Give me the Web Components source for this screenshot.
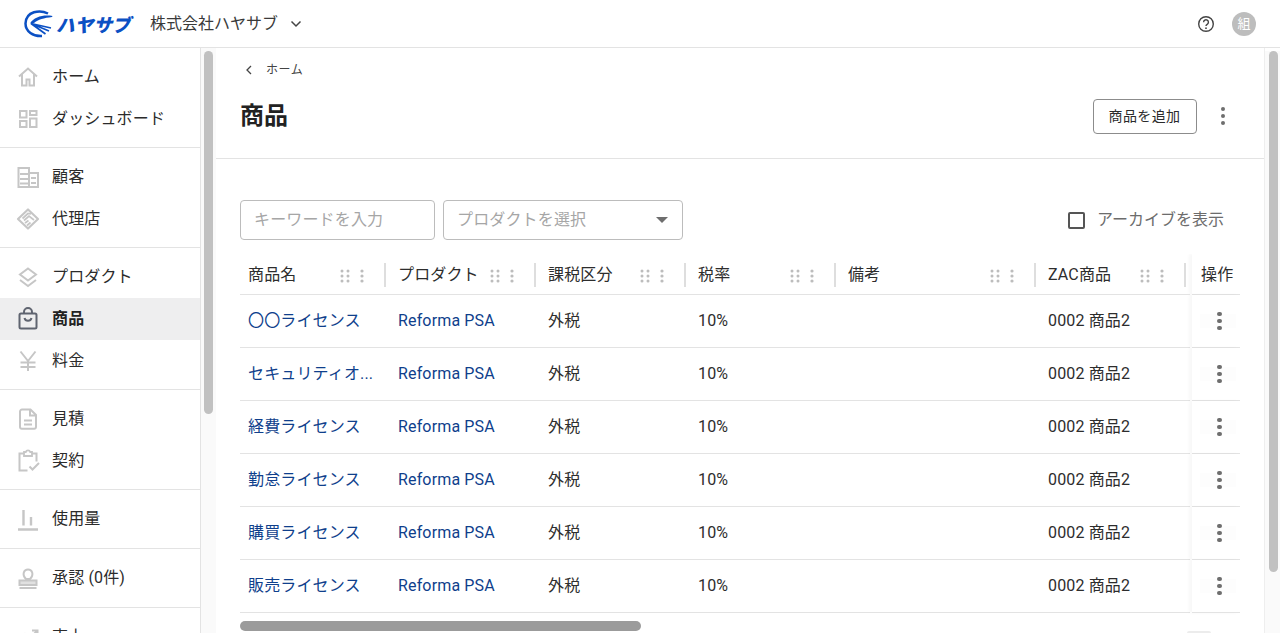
<!DOCTYPE html>
<html lang="ja">
<head>
<meta charset="utf-8">
<title>商品</title>
<style>
  html, body { margin: 0; height: 100%; overflow: hidden; background: #fff; }
  body {
    font-family: Roboto, "Noto Sans CJK JP", sans-serif;
    font-size: 16px;
    line-height: 20px;
    letter-spacing: .15px;
    color: #262626;
  }
</style>
</head>
<body>
<app-shell>
  <app-header slot="header" company="株式会社ハヤサブ" avatar="組"></app-header>
  <side-nav slot="nav">
    <nav-group>
      <nav-item icon="home">ホーム</nav-item>
      <nav-item icon="dashboard">ダッシュボード</nav-item>
    </nav-group>
    <nav-group>
      <nav-item icon="building">顧客</nav-item>
      <nav-item icon="handshake">代理店</nav-item>
    </nav-group>
    <nav-group>
      <nav-item icon="layers">プロダクト</nav-item>
      <nav-item icon="bag" active>商品</nav-item>
      <nav-item icon="yen">料金</nav-item>
    </nav-group>
    <nav-group>
      <nav-item icon="doc">見積</nav-item>
      <nav-item icon="contract">契約</nav-item>
    </nav-group>
    <nav-group single>
      <nav-item icon="bars">使用量</nav-item>
    </nav-group>
    <nav-group single>
      <nav-item icon="stamp">承認 (0件)</nav-item>
    </nav-group>
    <nav-group single>
      <nav-item icon="chart">売上</nav-item>
    </nav-group>
  </side-nav>
  <fake-scrollbar slot="nav-scroll" offset="3" length="363" pad="3" width="15"></fake-scrollbar>
  <page-head slot="main" back="ホーム" heading="商品" action="商品を追加"></page-head>
  <filter-bar slot="main"></filter-bar>
  <product-table slot="main"></product-table>
  <fake-scrollbar slot="main-scroll" offset="3" length="521" pad="4" width="15"></fake-scrollbar>
</app-shell>

<script>
const ICONS = {
  home: `<path d="M3 11.500 12 3.500l9 8M6 9.500V20.500h4.500V14.500h3V20.500H18V9.500" fill="none" stroke="currentColor" stroke-width="2"/>`,
  dashboard: `<path d="M4 4h6.500v6.500H4zM14 4h6.500v4H14zM14 11.500h6.500V20H14zM4 14h6.500v6H4z" fill="none" stroke="currentColor" stroke-width="2"/>`,
  building: `<path d="M2.500 3h10.500v19H2.500zM13 8h9v14h-9z" fill="none" stroke="currentColor" stroke-width="2"/><path d="M4 9h8M4 14h8M4 18.500h8M15 13h5M15 18h5" stroke="currentColor" stroke-width="2"/>`,
  handshake: `<path d="M12 2.500 22 12 12 21.500 2 12Z" fill="none" stroke="currentColor" stroke-width="2.200" stroke-linejoin="round"/><path d="M6.500 11.500 12 6.500l3 .5M8 13.500l5-4.500 5 4M9 16l3.500-2.500M11 18.500l3.500-3" fill="none" stroke="currentColor" stroke-width="1.700"/>`,
  layers: `<path d="M12 3.500 20 9.500 12 15.500 4 9.500Z" fill="none" stroke="currentColor" stroke-width="2"/><path d="M4 15l8 6 8-6" fill="none" stroke="currentColor" stroke-width="2"/>`,
  bag: `<rect x="3.500" y="6.500" width="17" height="15" rx="1.500" fill="none" stroke="currentColor" stroke-width="2"/><path d="M8 6.500V5a4 4 0 0 1 8 0v1.500M8.500 11a3.600 3.600 0 0 0 7 0" fill="none" stroke="currentColor" stroke-width="2"/>`,
  yen: `<path d="M4.500 2.500 12 12l7.500-9.500M12 12v10M4.500 13.500h15M4.500 18h15" fill="none" stroke="currentColor" stroke-width="2"/>`,
  doc: `<path d="M6 2.500h8.500L20 8v12a1.700 1.700 0 0 1-1.700 1.700H5.700A1.700 1.700 0 0 1 4 20V4.500A2 2 0 0 1 6 2.500ZM14 2.500V8.500h6M8 13.500h8M8 17.500h8" fill="none" stroke="currentColor" stroke-width="2"/>`,
  contract: `<path d="M8 4.500H3.500v17h8M16 4.500h4.500v8" fill="none" stroke="currentColor" stroke-width="2"/><path d="M8 3h1.800a2.300 2.300 0 0 1 4.400 0H16v4H8Z" fill="none" stroke="currentColor" stroke-width="1.800"/><path d="m13.500 17.500 3 3 6.500-6.500" fill="none" stroke="currentColor" stroke-width="2"/>`,
  bars: `<path d="M2 22.500h20M7.500 3v15.500M15 10v8.500" fill="none" stroke="currentColor" stroke-width="2.400"/>`,
  stamp: `<path d="M10 13c-4.500-4.800-2-9.500 2-9.500s6.500 4.700 2 9.500Z" fill="none" stroke="currentColor" stroke-width="2"/><path d="M3.500 14.500h17v4.500h-17z" fill="currentColor" opacity=".55"/><path d="M3.500 14.500h17v4.500h-17zM3.500 22h17" fill="none" stroke="currentColor" stroke-width="2"/>`,
  chart: `<path d="m3 14 6-5 5 4 7-7M16 5.500h5.500V11" fill="none" stroke="currentColor" stroke-width="2"/>`
};

class AppShell extends HTMLElement {
  constructor() {
    super();
    this.attachShadow({ mode: "open" });
    this.shadowRoot.innerHTML = `
      <style>
        :host { display: flex; flex-direction: column; height: 100vh; overflow: hidden; }
        .body { flex: 1; min-height: 0; display: flex; }
        .nav { width: 200px; flex: none; border-right: 1px solid #e3e3e3; overflow: hidden; }
        .main { flex: 1; min-width: 0; overflow: hidden; }
        .right { border-left: 1px solid #eeeeee; }
      </style>
      <slot name="header"></slot>
      <div class="body">
        <div class="nav"><slot name="nav"></slot></div>
        <slot name="nav-scroll"></slot>
        <div class="main"><slot name="main"></slot></div>
        <div class="right"><slot name="main-scroll"></slot></div>
      </div>`;
  }
}

class AppHeader extends HTMLElement {
  constructor() {
    super();
    this.attachShadow({ mode: "open" });
  }
  connectedCallback() {
    this.shadowRoot.innerHTML = `
      <style>
        :host { display: flex; align-items: center; height: 47px; flex: none; border-bottom: 1px solid #e3e3e3; padding: 0 24px; background: #fff; }
        .logo { display: flex; align-items: center; gap: 3px; width: 127px; margin-right: -1px; }
        .logo span { font: italic 900 18.500px/24px "Noto Sans CJK JP", sans-serif; color: #0b50c4; letter-spacing: .2px; white-space: nowrap; }
        .company { color: #3a3a3a; letter-spacing: 0; }
        .chev { margin-left: 12px; }
        .right { margin-left: auto; display: flex; align-items: center; gap: 17px; }
        .avatar { width: 24px; height: 24px; border-radius: 50%; background: #bdbdbd; color: #fff; font-size: 13px; display: flex; align-items: center; justify-content: center; }
      </style>
      <div class="logo">
        <svg width="29" height="28" viewBox="0 0 29 28">
          <path d="M24 3.500C16-.5 2 1 1.500 13.500 1.500 21.500 9 26.500 18 26" fill="none" stroke="#0b50c4" stroke-width="2.500"/>
          <path d="M28.500 6C20 4.500 10 6.500 6 13.500l4-.5c4-3.500 10-5 18-6Z" fill="#0b50c4"/>
          <path d="M7 13.500 27 18M7 13.500l18 7.500M7 13.500l14.500 10.500" fill="none" stroke="#0b50c4" stroke-width="1.700"/>
        </svg>
        <span>ハヤサブ</span>
      </div>
      <span class="company">${this.getAttribute("company")}</span>
      <svg class="chev" width="12" height="8" viewBox="0 0 12 8"><path d="M1.500 1.500 6 6l4.500-4.500" fill="none" stroke="#444" stroke-width="1.500"/></svg>
      <div class="right">
        <svg width="18" height="18" viewBox="0 0 18 18"><circle cx="9" cy="9" r="7.300" fill="none" stroke="#444" stroke-width="1.400"/><path d="M6.600 7.200a2.400 2.400 0 1 1 3.600 2.100c-.8.500-1.200.9-1.200 1.800" fill="none" stroke="#444" stroke-width="1.400"/><circle cx="9" cy="13.200" r=".9" fill="#444"/></svg>
        <div class="avatar">${this.getAttribute("avatar")}</div>
      </div>`;
  }
}

class SideNav extends HTMLElement {
  constructor() {
    super();
    this.attachShadow({ mode: "open" });
    this.shadowRoot.innerHTML = `<style>:host { display: block; }</style><slot></slot>`;
  }
}

class NavGroup extends HTMLElement {
  constructor() {
    super();
    this.attachShadow({ mode: "open" });
    this.shadowRoot.innerHTML = `
      <style>
        :host { display: block; padding: 7.5px 0; border-bottom: 1px solid #e3e3e3; }
        :host(:first-child) { padding: 8px 0 7px; }
        :host([single]) { padding-bottom: 8.5px; }
      </style>
      <slot></slot>`;
  }
}

class NavItem extends HTMLElement {
  constructor() {
    super();
    this.attachShadow({ mode: "open" });
  }
  connectedCallback() {
    this.shadowRoot.innerHTML = `
      <style>
        :host { display: flex; align-items: center; height: 42px; padding-left: 16px; gap: 12px; color: #2b2b2b; }
        :host([active]) { background: #eeeeef; font-weight: 700; color: #222; }
        svg { width: 24px; height: 24px; color: #c6c6c6; flex: none; }
        :host([active]) svg { color: #5f6470; }
      </style>
      <svg viewBox="0 0 24 24">${ICONS[this.getAttribute("icon")]}</svg>
      <slot></slot>`;
  }
}

class FakeScrollbar extends HTMLElement {
  constructor() {
    super();
    this.attachShadow({ mode: "open" });
  }
  connectedCallback() {
    this.shadowRoot.innerHTML = `
      <style>
        :host { display: block; width: ${this.getAttribute("width")}px; height: 100%; box-sizing: border-box; background: #fafafa; padding-left: ${this.getAttribute("pad")}px; }
        .thumb { width: 9px; border-radius: 5px; background: #c1c1c1; margin-top: ${this.getAttribute("offset")}px; height: ${this.getAttribute("length")}px; }
      </style>
      <div class="thumb"></div>`;
  }
}

class KebabIcon extends HTMLElement {
  constructor() {
    super();
    this.attachShadow({ mode: "open" });
    this.shadowRoot.innerHTML = `
      <style>
        :host { display: inline-flex; flex-direction: column; gap: 2.500px; }
        i { width: 4.500px; height: 4.500px; border-radius: 50%; background: #6e6e6e; display: block; }
      </style>
      <i></i><i></i><i></i>`;
  }
}

class PageHead extends HTMLElement {
  constructor() {
    super();
    this.attachShadow({ mode: "open" });
  }
  connectedCallback() {
    this.shadowRoot.innerHTML = `
      <style>
        :host { display: block; height: 111px; box-sizing: border-box; border-bottom: 1px solid #e3e3e3; padding: 13px 39px 0 24px; }
        .crumb { display: flex; align-items: center; gap: 14px; padding-left: 6px; font-size: 12px; letter-spacing: .6px; color: #444; height: 18px; }
        .row { display: flex; align-items: center; justify-content: space-between; margin-top: 19px; height: 36px; }
        h1 { margin: 0; font-size: 24px; font-weight: 700; color: #222; line-height: 36px; letter-spacing: 0; }
        .actions { display: flex; align-items: center; gap: 24px; }
        button { font: inherit; font-size: 14px; letter-spacing: .4px; line-height: 20px; color: #2b2b2b; background: #fff; border: 1px solid #8c8c8c; border-radius: 4px; height: 35px; width: 104px; padding: 0; }
      </style>
      <div class="crumb">
        <svg width="6" height="10" viewBox="0 0 6 10"><path d="M5 1 1 5l4 4" fill="none" stroke="#444" stroke-width="1.300"/></svg>
        <span>${this.getAttribute("back")}</span>
      </div>
      <div class="row">
        <h1>${this.getAttribute("heading")}</h1>
        <div class="actions">
          <button>${this.getAttribute("action")}</button>
          <kebab-icon></kebab-icon>
        </div>
      </div>`;
  }
}

class FilterBar extends HTMLElement {
  constructor() {
    super();
    this.attachShadow({ mode: "open" });
    this.shadowRoot.innerHTML = `
      <style>
        :host { display: flex; align-items: center; gap: 8px; padding: 41px 40px 0 24px; }
        .field { box-sizing: border-box; height: 40px; border: 1px solid #bcbcbc; border-radius: 4px; display: flex; align-items: center; padding: 0 14px 0 13px; color: #a6a6a6; }
        .kw { width: 195px; }
        .sel { width: 240px; justify-content: space-between; }
        .tri { width: 0; height: 0; border: 6px solid transparent; border-top: 6px solid #6e6e6e; border-bottom: 0; }
        .arch { margin-left: auto; display: flex; align-items: center; gap: 12px; color: #6c6c6c; letter-spacing: 0; }
        .box { width: 13px; height: 13px; border: 2px solid #555; border-radius: 2px; }
      </style>
      <div class="field kw">キーワードを入力</div>
      <div class="field sel"><span>プロダクトを選択</span><span class="tri"></span></div>
      <div class="arch"><span class="box"></span><span>アーカイブを表示</span></div>`;
  }
}

class ProductTable extends HTMLElement {
  constructor() {
    super();
    this.attachShadow({ mode: "open" });
    const cols = ["商品名", "プロダクト", "課税区分", "税率", "備考", "ZAC商品"];
    const names = ["〇〇ライセンス", "セキュリティオ...", "経費ライセンス", "勤怠ライセンス", "購買ライセンス", "販売ライセンス"];
    const grip = `<svg class="grip" width="10" height="14" viewBox="0 0 10 14"><g fill="#bdbdbd"><circle cx="2" cy="2" r="1.500"/><circle cx="8" cy="2" r="1.500"/><circle cx="2" cy="7" r="1.500"/><circle cx="8" cy="7" r="1.500"/><circle cx="2" cy="12" r="1.500"/><circle cx="8" cy="12" r="1.500"/></g></svg>
      <svg class="dots" width="4" height="14" viewBox="0 0 4 14"><g fill="#bdbdbd"><circle cx="2" cy="2" r="1.600"/><circle cx="2" cy="7" r="1.600"/><circle cx="2" cy="12" r="1.600"/></g></svg>`;
    const head = cols.map((t) => `<div class="th"><span class="t">${t}</span>${grip}</div>`).join("");
    const rows = names.map((n) => `
      <div class="td"><a>${n}</a></div>
      <div class="td"><a>Reforma PSA</a></div>
      <div class="td">外税</div>
      <div class="td">10%</div>
      <div class="td"></div>
      <div class="td">0002 商品2</div>
      <div class="td op"><kebab-icon></kebab-icon></div>`).join("");
    this.shadowRoot.innerHTML = `
      <style>
        :host { display: block; margin: 14px 24px 0 24px; height: 379px; overflow: hidden; position: relative; }
        .grid { display: grid; grid-template-columns: 150px 150px 150px 150px 200px 150px 50px; width: 1000px; color: #2d2d2d; }
        .th { height: 41px; box-sizing: border-box; display: flex; align-items: center; padding: 1px 8px 0; border-bottom: 1px solid #e3e3e3; position: relative; white-space: nowrap; }
        .th .t { flex: 1; }
        .th svg { margin-top: 2px; }
        .th .grip { margin-right: 10px; }
        .th .dots { margin-right: 18px; }
        .th::after { content: ""; position: absolute; right: 4px; top: 9px; width: 2px; height: 24px; background: #dedede; }
        .td { height: 53px; box-sizing: border-box; display: flex; align-items: center; padding: 0 8px; border-bottom: 1px solid #e3e3e3; white-space: nowrap; overflow: hidden; }
        a { color: #0f3f8c; }
        .op-head, .op { margin-left: 2px; background: #fff; box-shadow: -3px 0 3px rgba(0,0,0,.03); }
        .op-head { height: 41px; box-sizing: border-box; padding: 1px 9px 0; display: flex; align-items: center; border-bottom: 1px solid #e3e3e3; white-space: nowrap; overflow: hidden; }
        .op { padding: 0 0 0 25px; background: linear-gradient(#fdfdfd, #fdfdfd) 8px 50% / 36px 14px no-repeat, #fff; }
        .track { position: absolute; left: 0; bottom: 2px; width: 401px; height: 10px; border-radius: 5px; background: #9b9b9b; }
        .bump { position: absolute; left: 947px; bottom: 0; width: 24px; height: 2px; border-radius: 4px 4px 0 0; background: #ececec; }
      </style>
      <div class="grid">
        ${head}
        <div class="op-head">操作</div>
        ${rows}
      </div>
      <div class="track"></div>
      <div class="bump"></div>`;
  }
}

customElements.define("app-shell", AppShell);
customElements.define("app-header", AppHeader);
customElements.define("side-nav", SideNav);
customElements.define("nav-group", NavGroup);
customElements.define("nav-item", NavItem);
customElements.define("fake-scrollbar", FakeScrollbar);
customElements.define("kebab-icon", KebabIcon);
customElements.define("page-head", PageHead);
customElements.define("filter-bar", FilterBar);
customElements.define("product-table", ProductTable);
</script>
</body>
</html>
